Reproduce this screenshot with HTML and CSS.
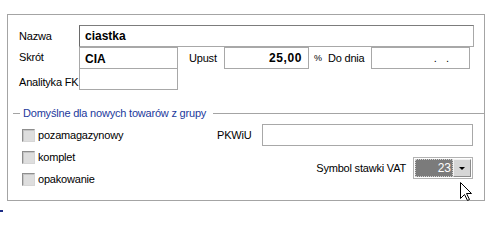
FILE: index.html
```html
<!DOCTYPE html>
<html lang="pl">
<head>
<meta charset="utf-8">
<title>Grupa towarów</title>
<link rel="stylesheet" href="styles.css">
</head>
<body>
<div class="panel">
  <div class="row">
    <span class="lbl">Nazwa</span>
    <div class="field field-nazwa val">ciastka</div>
  </div>
  <div class="row">
    <span class="lbl lbl-up">Skrót</span>
    <div class="field field-short val">CIA</div>
    <span class="lbl lbl-upust">Upust</span>
    <div class="field field-num val">25,00</div>
    <span class="pct">%</span>
    <span class="lbl lbl-dodnia">Do dnia</span>
    <div class="field field-date">.   .</div>
  </div>
  <div class="row row-anal">
    <span class="lbl lbl-bottom">Analityka FK</span>
    <div class="field field-short"></div>
  </div>

  <div class="group-title">
    <span class="seg"></span>
    <span class="title">Domyślne dla nowych towarów z grupy</span>
    <span class="line"></span>
  </div>

  <div class="group-body">
    <div class="checks">
      <div class="check"><span class="box"></span><span class="check-lbl">pozamagazynowy</span></div>
      <div class="check"><span class="box"></span><span class="check-lbl">komplet</span></div>
      <div class="check"><span class="box"></span><span class="check-lbl">opakowanie</span></div>
    </div>
    <div class="right">
      <div class="pk-row">
        <span class="pk-lbl">PKWiU</span>
        <div class="field field-pk"></div>
      </div>
      <div class="vat-row">
        <span class="vat-lbl">Symbol stawki VAT</span>
        <div class="combo">
          <div class="combo-sel">23</div>
          <div class="combo-btn"><span class="arrow"></span></div>
        </div>
      </div>
    </div>
  </div>

  <svg class="cursor" width="13" height="20" viewBox="0 0 13 20">
    <polygon points="0.5,0.5 0.5,16.5 4.5,12.5 7.5,18.5 9.5,17.5 6.5,11.5 11.5,11.5" fill="#fff" stroke="#000" stroke-width="1" stroke-linejoin="miter"/>
  </svg>
</div>
<div class="mark"></div>
</body>
</html>
```

FILE: styles.css
```css
html, body {
  margin: 0;
  padding: 0;
  background: #fff;
}

body {
  font-family: "Liberation Sans", Arial, sans-serif;
  font-size: 11px;
  color: #000;
  letter-spacing: -0.2px;
}

.panel {
  position: relative;
  box-sizing: border-box;
  width: 478px;
  height: 187px;
  margin: 14px 0 0 7px;
  padding: 10px 0 0 11px;
  border: 1px solid #a4a4a4;
}

.row {
  display: flex;
  align-items: center;
  height: 22px;
}

.row-anal {
  margin-top: -1px;
}

.lbl {
  flex: 0 0 auto;
  white-space: nowrap;
  line-height: 13px;
}

.row > .lbl:first-child {
  width: 60px;
}

.lbl-up {
  margin-top: -2px;
}

.lbl-bottom {
  align-self: flex-end;
  margin-bottom: 1px;
}

.field {
  box-sizing: border-box;
  height: 22px;
  border: 1px solid #a8a8a8;
  background: #fff;
  white-space: pre;
}

.val {
  font-weight: bold;
  font-size: 12px;
  line-height: 20px;
  letter-spacing: 0;
  padding-left: 5px;
}

.field-nazwa {
  width: 395px;
  border-top-color: #7c7c7c;
  border-left-color: #6a6a6a;
}

.field-short {
  width: 99px;
}

.row .field-short.val {
  padding-top: 2px;
  line-height: 18px;
}

.lbl-upust {
  margin-left: 11px;
  width: 35px;
}

.field-num {
  width: 85px;
  text-align: right;
  padding-left: 0;
  padding-right: 6px;
  letter-spacing: 0.6px;
}

.pct {
  width: 11px;
  margin-left: 4px;
  font-size: 9px;
  line-height: 13px;
  padding-left: 1px;
}

.lbl-dodnia {
  width: 46px;
  padding-left: 3px;
  box-sizing: border-box;
}

.field-date {
  width: 99px;
  text-align: right;
  padding-right: 20px;
  line-height: 20px;
  letter-spacing: 0;
}

.group-title {
  display: flex;
  align-items: center;
  height: 14px;
  margin: 16px 0 0 -6px;
}

.seg {
  width: 7px;
  height: 1px;
  background: #a4a4a4;
  margin-right: 3px;
}

.title {
  color: #22399c;
  line-height: 14px;
  white-space: nowrap;
  letter-spacing: -0.2px;
}

.line {
  flex: 1;
  height: 1px;
  margin-left: 7px;
  background: #a4a4a4;
}

.group-body {
  display: flex;
  margin: 4px 0 0 3px;
}

.checks {
  width: 195px;
}

.check {
  display: flex;
  align-items: center;
  height: 22px;
}

.box {
  box-sizing: border-box;
  width: 13px;
  height: 13px;
  border: 1px solid;
  border-color: #8e8e8e #d6d6d6 #d6d6d6 #8e8e8e;
  background: #dedede;
  box-shadow: inset 1px 1px 0 #c4c4c4;
}

.check-lbl {
  margin-left: 3px;
  line-height: 13px;
}

.right {
  width: 256px;
}

.pk-row {
  display: flex;
  align-items: center;
  height: 22px;
}

.pk-lbl {
  width: 45px;
  line-height: 13px;
}

.field-pk {
  width: 211px;
}

.vat-row {
  display: flex;
  align-items: center;
  justify-content: flex-end;
  height: 22px;
  margin-top: 11px;
}

.vat-lbl {
  margin-right: 7px;
  line-height: 13px;
  margin-top: 1px;
}

.combo {
  display: flex;
  box-sizing: border-box;
  width: 60px;
  height: 22px;
  padding: 1px;
  border: 1px solid #b2b2b2;
  background: #fff;
}

.combo-sel {
  box-sizing: border-box;
  width: 38px;
  height: 18px;
  background: #7b7b7b;
  border: 1px dotted #d2d2d2;
  color: #fff;
  font-size: 12px;
  line-height: 16px;
  text-align: right;
  padding-right: 1px;
  letter-spacing: 0;
}

.combo-btn {
  box-sizing: border-box;
  width: 18px;
  height: 18px;
  display: flex;
  align-items: center;
  justify-content: center;
  background: #d6d6d6;
  border: 1px solid;
  border-color: #f2f2f2 #8c8c8c #8c8c8c #f2f2f2;
}

.arrow {
  width: 0;
  height: 0;
  border-left: 3px solid transparent;
  border-right: 3px solid transparent;
  border-top: 3px solid #000;
}

.cursor {
  position: absolute;
  left: 452px;
  top: 167px;
}

.mark {
  width: 3px;
  height: 2px;
  margin-top: 9px;
  background: #1d2d86;
}
```
